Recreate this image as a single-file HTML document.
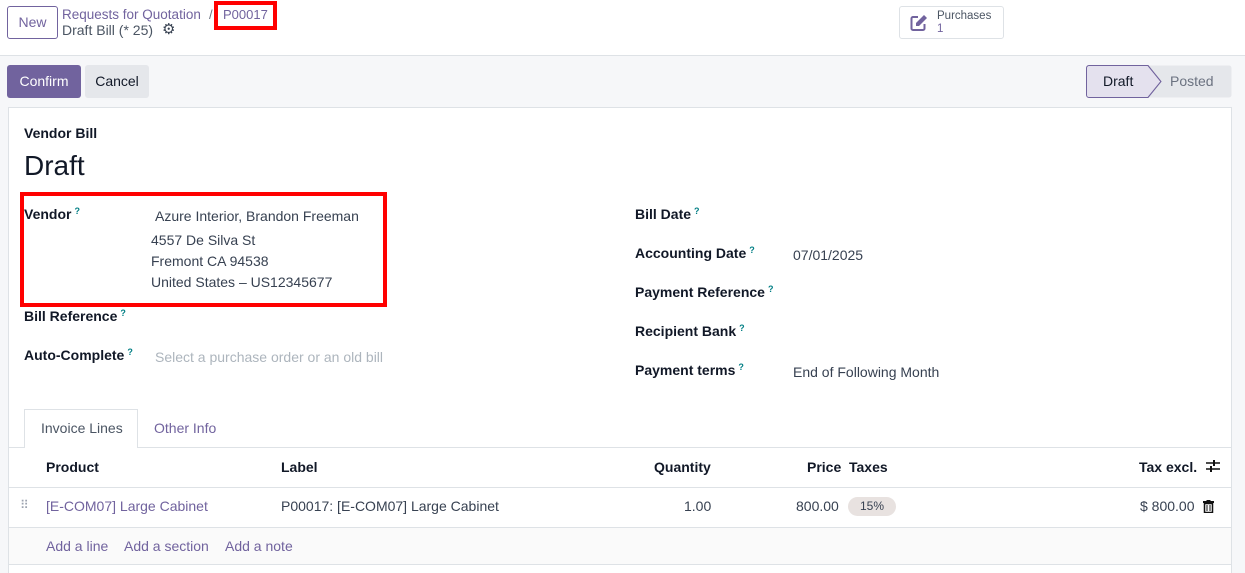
<!DOCTYPE html>
<html><head><style>
*{box-sizing:border-box;margin:0;padding:0}
html,body{width:1245px;height:573px;overflow:hidden}
body{background:#f6f7f9;font-family:"Liberation Sans",sans-serif;font-size:14px;color:#374151;position:relative}
.a{position:absolute;white-space:nowrap}
.top{position:absolute;left:0;top:0;width:1245px;height:56px;background:#fff;border-bottom:1px solid #dee2e6}
.lbl{font-weight:bold;color:#111827;font-size:14px}
.q{color:#017e84;font-size:9px;vertical-align:top;margin-left:3px}
.purple{color:#71639e}
</style></head><body>
<div class="top"></div>
<div class="a" style="left:7px;top:6px;width:51px;height:33px;border:1px solid #71639e;border-radius:3px;color:#71639e;font-size:14px;line-height:31px;text-align:center">New</div>
<div class="a purple" style="left:62px;top:7px;font-size:13.5px">Requests for Quotation</div>
<div class="a" style="left:209px;top:7px;font-size:13px;color:#6b7280">/</div>
<div class="a" style="left:214px;top:1px;width:63px;height:29px;border:4px solid #f00"></div>
<div class="a purple" style="left:223px;top:7px;font-size:13px">P00017</div>
<div class="a" style="left:62px;top:22px;font-size:14px;color:#4b5563">Draft Bill (* 25)</div>
<div class="a" style="left:162px;top:20px;font-size:15px;color:#374151">⚙</div>
<div class="a" style="left:899px;top:6px;width:105px;height:33px;border:1px solid #dee2e6;border-radius:3px;background:#fff"></div>
<svg class="a" style="left:909px;top:13px" width="20" height="20" viewBox="0 0 20 20"><path d="M9 4H4a1.5 1.5 0 0 0-1.5 1.5v10A1.5 1.5 0 0 0 4 17h10a1.5 1.5 0 0 0 1.5-1.5V11" fill="none" stroke="#71639e" stroke-width="2"/><path d="M15 2l3 3-8 8H7v-3z" fill="#71639e"/></svg>
<div class="a" style="left:937px;top:10px;font-size:11.5px;color:#4b5563;line-height:13px">Purchases<br><span class="purple">1</span></div>

<div class="a" style="left:7px;top:65px;width:74px;height:33px;background:#71639e;border-radius:3px;color:#fff;line-height:33px;text-align:center">Confirm</div>
<div class="a" style="left:85px;top:65px;width:64px;height:33px;background:#e5e7eb;border-radius:3px;color:#111827;line-height:33px;text-align:center">Cancel</div>
<svg class="a" style="left:1086px;top:65px" width="146" height="33"><path d="M3 .5H62L75 16.5 62 32.5H3a2.5 2.5 0 0 1-2.5-2.5V3A2.5 2.5 0 0 1 3 .5z" fill="#e4e1ee" stroke="#71639e"/><path d="M62 .5H143a2.5 2.5 0 0 1 2.5 2.5v27a2.5 2.5 0 0 1-2.5 2.5H62L75 16.5z" fill="#e5e7eb"/><path d="M62 .5L75 16.5 62 32.5" fill="none" stroke="#71639e"/></svg>
<div class="a" style="left:1103px;top:73px;color:#111827">Draft</div>
<div class="a" style="left:1170px;top:73px;color:#6b7280">Posted</div>

<div class="a" style="left:8px;top:107px;width:1224px;height:480px;background:#fff;border:1px solid #dee2e6"></div>
<div class="a lbl" style="left:24px;top:125px;font-size:14px">Vendor Bill</div>
<div class="a" style="left:24px;top:150px;font-size:28px;color:#111827">Draft</div>

<div class="a" style="left:20px;top:192px;width:367px;height:115px;border:4px solid #f00"></div>
<div class="a lbl" style="left:24px;top:206px">Vendor<span class="q">?</span></div>
<div class="a" style="left:155px;top:208px">Azure Interior, Brandon Freeman</div>
<div class="a" style="left:151px;top:230px;line-height:21px">4557 De Silva St<br>Fremont CA 94538<br>United States – US12345677</div>
<div class="a lbl" style="left:24px;top:308px">Bill Reference<span class="q">?</span></div>
<div class="a lbl" style="left:24px;top:347px">Auto-Complete<span class="q">?</span></div>
<div class="a" style="left:155px;top:349px;color:#adb5bd">Select a purchase order or an old bill</div>

<div class="a lbl" style="left:635px;top:206px">Bill Date<span class="q">?</span></div>
<div class="a lbl" style="left:635px;top:245px">Accounting Date<span class="q">?</span></div>
<div class="a" style="left:793px;top:247px">07/01/2025</div>
<div class="a lbl" style="left:635px;top:284px">Payment Reference<span class="q">?</span></div>
<div class="a lbl" style="left:635px;top:323px">Recipient Bank<span class="q">?</span></div>
<div class="a lbl" style="left:635px;top:362px">Payment terms<span class="q">?</span></div>
<div class="a" style="left:793px;top:364px">End of Following Month</div>

<div class="a" style="left:8px;top:447px;width:1224px;border-top:1px solid #dee2e6"></div>
<div class="a" style="left:24px;top:409px;width:114px;height:39px;background:#fff;border:1px solid #dee2e6;border-bottom:none"></div>
<div class="a" style="left:41px;top:420px;color:#4b5563">Invoice Lines</div>
<div class="a purple" style="left:154px;top:420px">Other Info</div>

<div class="a lbl" style="left:46px;top:459px">Product</div>
<div class="a lbl" style="left:281px;top:459px">Label</div>
<div class="a lbl" style="left:654px;top:459px">Quantity</div>
<div class="a lbl" style="left:807px;top:459px">Price</div>
<div class="a lbl" style="left:849px;top:459px">Taxes</div>
<div class="a lbl" style="left:1139px;top:459px">Tax excl.</div>
<svg class="a" style="left:1205px;top:459px" width="16" height="14" viewBox="0 0 16 14"><path d="M1 4h14M1 10h14" stroke="#111" stroke-width="1.5"/><rect x="8" y="1" width="2" height="6" fill="#111"/><rect x="5" y="7" width="2" height="6" fill="#111"/></svg>
<div class="a" style="left:8px;top:487px;width:1224px;border-top:1px solid #dee2e6"></div>
<div class="a" style="left:20px;top:498px;color:#9ca3af;font-size:12px;letter-spacing:-2px">⠿</div>
<div class="a purple" style="left:46px;top:498px">[E-COM07] Large Cabinet</div>
<div class="a" style="left:281px;top:498px">P00017: [E-COM07] Large Cabinet</div>
<div class="a" style="left:684px;top:498px">1.00</div>
<div class="a" style="left:796px;top:498px">800.00</div>
<div class="a" style="left:848px;top:497px;width:48px;height:19px;border-radius:10px;background:#e8e2e0;font-size:12px;line-height:19px;text-align:center;color:#374151">15%</div>
<div class="a" style="left:1140px;top:498px">$ 800.00</div>
<svg class="a" style="left:1203px;top:500px" width="11" height="13" viewBox="0 0 11 13"><rect x="0" y="1" width="11" height="2" fill="#111"/><rect x="3.5" y="0" width="4" height="2" fill="#111"/><path d="M1.5 3.5h8v9h-8z" fill="none" stroke="#111" stroke-width="1.5"/><path d="M4 5v6M7 5v6" stroke="#111"/></svg>
<div class="a" style="left:9px;top:527px;width:1222px;height:38px;background:#fafafa;border-top:1px solid #dee2e6;border-bottom:1px solid #dee2e6"></div>
<div class="a purple" style="left:46px;top:538px">Add a line</div>
<div class="a purple" style="left:124px;top:538px">Add a section</div>
<div class="a purple" style="left:225px;top:538px">Add a note</div>
</body></html>
